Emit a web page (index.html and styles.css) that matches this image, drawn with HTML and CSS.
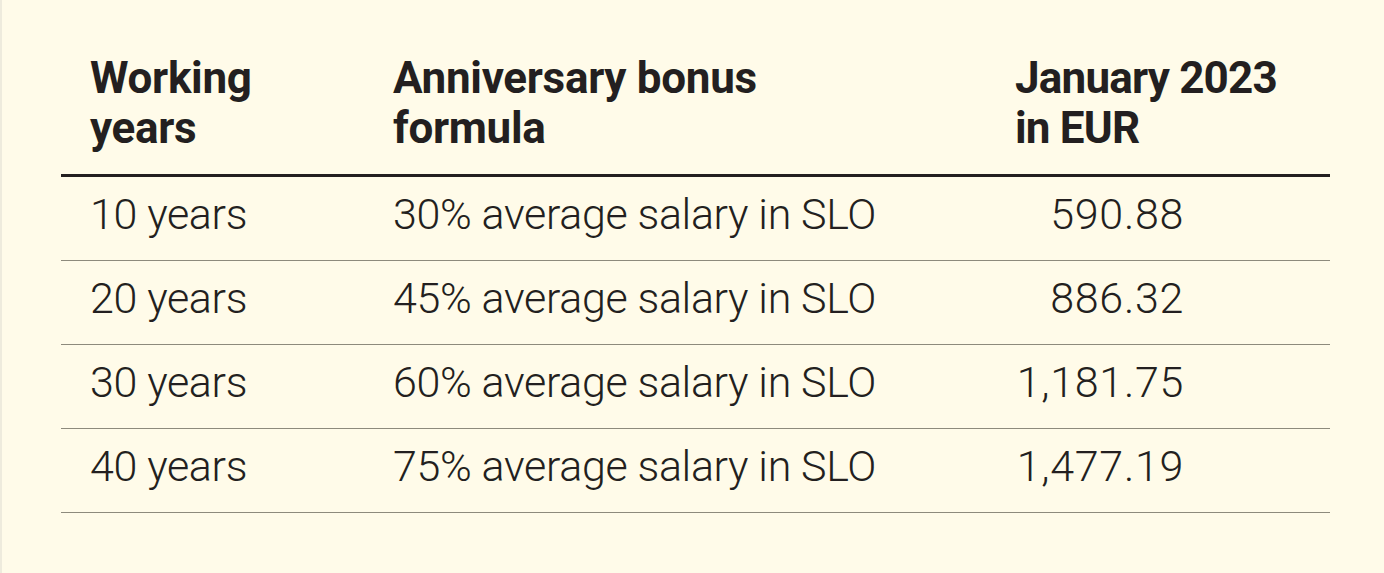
FILE: index.html
```html
<!DOCTYPE html>
<html lang="en">
<head>
<meta charset="utf-8">
<title>Anniversary bonus</title>
<link rel="stylesheet" href="styles.css">
</head>
<body>
<main class="page">
  <table class="bonus">
    <thead>
      <tr>
        <th class="c1">Working<br>years</th>
        <th class="c2">Anniversary bonus<br>formula</th>
        <th class="c3">January 2023<br>in EUR</th>
      </tr>
    </thead>
    <tbody>
      <tr>
        <td class="c1">10 years</td>
        <td class="c2">30% average salary in SLO</td>
        <td class="c3"><span class="num">590.88</span></td>
      </tr>
      <tr>
        <td class="c1">20 years</td>
        <td class="c2">45% average salary in SLO</td>
        <td class="c3"><span class="num">886.32</span></td>
      </tr>
      <tr>
        <td class="c1">30 years</td>
        <td class="c2">60% average salary in SLO</td>
        <td class="c3"><span class="num">1,181.75</span></td>
      </tr>
      <tr>
        <td class="c1">40 years</td>
        <td class="c2">75% average salary in SLO</td>
        <td class="c3"><span class="num">1,477.19</span></td>
      </tr>
    </tbody>
  </table>
</main>
</body>
</html>
```
FILE: styles.css
```css
html, body {
  margin: 0;
  padding: 0;
  background: #fffbe9;
}
body {
  width: 1384px;
  height: 573px;
  overflow: hidden;
  box-sizing: border-box;
  border-left: 2px solid #eeebdd;
  font-family: Roboto, "Liberation Sans", sans-serif;
  color: #231f20;
}
.page {
  padding: 53px 0 0 59px;
}
.bonus {
  border-collapse: collapse;
  width: 1269px;
  table-layout: fixed;
}
.bonus th,
.bonus td {
  padding: 0;
  text-align: left;
  vertical-align: top;
}
.bonus th {
  font-size: 44px;
  line-height: 50px;
  font-weight: 700;
  letter-spacing: -0.3px;
  padding-bottom: 21px;
  border-bottom: 3px solid #231f20;
}
.bonus th.c3 {
  letter-spacing: -0.8px;
}
.bonus td {
  font-size: 43px;
  line-height: 75px;
  font-weight: 300;
  letter-spacing: -0.35px;
  height: 75px;
  padding-bottom: 8px;
  border-bottom: 1px solid #8d8a7c;
}
.c1 {
  width: 332px;
  padding-left: 29px !important;
  box-sizing: border-box;
}
.c2 {
  width: 622px;
}
.num {
  display: inline-block;
  width: 169px;
  text-align: right;
  letter-spacing: 0.7px;
}
```
